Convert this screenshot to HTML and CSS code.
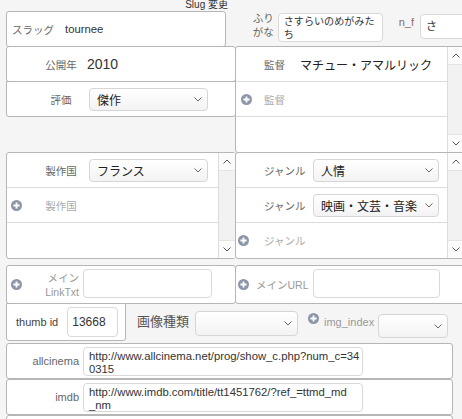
FILE: index.html
```html
<!DOCTYPE html>
<html lang="ja">
<head>
<meta charset="utf-8">
<title>Movie</title>
<link rel="stylesheet" href="styles.css">
</head>
<body>
<div class="page">
  <div class="slug-link">Slug 変更</div>

  <div class="row top-row">
    <div class="box slug-box">
      <span class="lbl">スラッグ</span><span class="slug-val">tournee</span>
    </div>
    <div class="furi">
      <div class="furi-lbl">ふり<br>がな</div>
      <div class="input furi-input">さすらいのめがみた<br>ち</div>
      <div class="nf-lbl">n_f</div>
      <div class="input nf-input">さ</div>
    </div>
  </div>

  <div class="row mid-row">
    <div class="col-left">
      <div class="box field">
        <span class="lbl cell-c">公開年</span><span class="year">2010</span>
      </div>
      <div class="box field">
        <span class="lbl cell-c">評価</span>
        <div class="select sel-l"><span>傑作</span><svg class="chev" width="8" height="5" viewBox="0 0 8 5"><polyline points="0.5,0.5 4,4 7.5,0.5" fill="none" stroke="#666" stroke-width="1"/></svg></div>
      </div>
    </div>
    <div class="box list">
      <div class="rows">
        <div class="lrow"><span class="lead-r"></span><span class="lbl cell-dir">監督</span><span class="person">マチュー・アマルリック</span></div>
        <div class="lrow"><span class="lead-r dir-lead"><svg class="plus" width="11" height="11" viewBox="0 0 12 12"><circle cx="6" cy="6" r="6" fill="#8c96a8"/><path d="M6 2.6v6.8M2.6 6h6.8" stroke="#fff" stroke-width="2"/></svg></span><span class="lbl ph">監督</span></div>
        <div class="lrow"></div>
      </div>
      <div class="scroll">
        <div class="sb-btn up"><svg width="8" height="5" viewBox="0 0 8 5"><polyline points="0.5,4.5 4,1 7.5,4.5" fill="none" stroke="#555" stroke-width="1"/></svg></div>
        <div class="sb-btn down"><svg width="8" height="5" viewBox="0 0 8 5"><polyline points="0.5,0.5 4,4 7.5,0.5" fill="none" stroke="#555" stroke-width="1"/></svg></div>
      </div>
    </div>
  </div>

  <div class="row lists-row">
    <div class="box list list-l">
      <div class="rows">
        <div class="lrow"><span class="lead-l"></span><span class="lbl cell-c">製作国</span>
          <div class="select sel-l"><span>フランス</span><svg class="chev" width="8" height="5" viewBox="0 0 8 5"><polyline points="0.5,0.5 4,4 7.5,0.5" fill="none" stroke="#666" stroke-width="1"/></svg></div>
        </div>
        <div class="lrow"><span class="lead-l"><svg class="plus" width="11" height="11" viewBox="0 0 12 12"><circle cx="6" cy="6" r="6" fill="#8c96a8"/><path d="M6 2.6v6.8M2.6 6h6.8" stroke="#fff" stroke-width="2"/></svg></span><span class="lbl ph cell-c">製作国</span></div>
        <div class="lrow"></div>
      </div>
      <div class="scroll">
        <div class="sb-btn up"><svg width="8" height="5" viewBox="0 0 8 5"><polyline points="0.5,4.5 4,1 7.5,4.5" fill="none" stroke="#555" stroke-width="1"/></svg></div>
        <div class="sb-btn down"><svg width="8" height="5" viewBox="0 0 8 5"><polyline points="0.5,0.5 4,4 7.5,0.5" fill="none" stroke="#555" stroke-width="1"/></svg></div>
      </div>
    </div>
    <div class="box list">
      <div class="rows">
        <div class="lrow"><span class="lead-r"></span><span class="lbl cell-genre">ジャンル</span>
          <div class="select sel-r"><span>人情</span><svg class="chev" width="8" height="5" viewBox="0 0 8 5"><polyline points="0.5,0.5 4,4 7.5,0.5" fill="none" stroke="#666" stroke-width="1"/></svg></div>
        </div>
        <div class="lrow"><span class="lead-r"></span><span class="lbl cell-genre">ジャンル</span>
          <div class="select sel-r"><span>映画・文芸・音楽</span><svg class="chev" width="8" height="5" viewBox="0 0 8 5"><polyline points="0.5,0.5 4,4 7.5,0.5" fill="none" stroke="#666" stroke-width="1"/></svg></div>
        </div>
        <div class="lrow"><span class="lead-r genre-lead"><svg class="plus" width="11" height="11" viewBox="0 0 12 12"><circle cx="6" cy="6" r="6" fill="#8c96a8"/><path d="M6 2.6v6.8M2.6 6h6.8" stroke="#fff" stroke-width="2"/></svg></span><span class="lbl ph">ジャンル</span></div>
      </div>
      <div class="scroll">
        <div class="sb-btn up"><svg width="8" height="5" viewBox="0 0 8 5"><polyline points="0.5,4.5 4,1 7.5,4.5" fill="none" stroke="#555" stroke-width="1"/></svg></div>
        <div class="sb-btn down"><svg width="8" height="5" viewBox="0 0 8 5"><polyline points="0.5,0.5 4,4 7.5,0.5" fill="none" stroke="#555" stroke-width="1"/></svg></div>
      </div>
    </div>
  </div>

  <div class="row link-row">
    <div class="box link-box">
      <span class="lead-l"><svg class="plus" width="11" height="11" viewBox="0 0 12 12"><circle cx="6" cy="6" r="6" fill="#8c96a8"/><path d="M6 2.6v6.8M2.6 6h6.8" stroke="#fff" stroke-width="2"/></svg></span>
      <span class="lbl light link-lbl">メイン<br>LinkTxt</span>
      <div class="input link-input"></div>
    </div>
    <div class="box url-box">
      <svg class="plus url-plus" width="11" height="11" viewBox="0 0 12 12"><circle cx="6" cy="6" r="6" fill="#8c96a8"/><path d="M6 2.6v6.8M2.6 6h6.8" stroke="#fff" stroke-width="2"/></svg>
      <span class="lbl light url-lbl">メインURL</span>
      <div class="input url-input"></div>
    </div>
  </div>

  <div class="row thumb-row">
    <div class="box thumb-box">
      <span class="thumb-lbl">thumb id</span>
      <div class="input thumb-input">13668</div>
    </div>
    <span class="kind-lbl">画像種類</span>
    <div class="select sel-kind"><span></span><svg class="chev" width="8" height="5" viewBox="0 0 8 5"><polyline points="0.5,0.5 4,4 7.5,0.5" fill="none" stroke="#666" stroke-width="1"/></svg></div>
    <svg class="plus idx-plus" width="11" height="11" viewBox="0 0 12 12"><circle cx="6" cy="6" r="6" fill="#8c96a8"/><path d="M6 2.6v6.8M2.6 6h6.8" stroke="#fff" stroke-width="2"/></svg>
    <span class="idx-lbl">img_index</span>
    <div class="select sel-idx"><span></span><svg class="chev" width="8" height="5" viewBox="0 0 8 5"><polyline points="0.5,0.5 4,4 7.5,0.5" fill="none" stroke="#666" stroke-width="1"/></svg></div>
  </div>

  <div class="box url-field first">
    <span class="url-name">allcinema</span>
    <div class="input area"><span class="line">http://www.allcinema.net/prog/show_c.php?num_c=34</span><span class="line">0315</span></div>
  </div>
  <div class="box url-field">
    <span class="url-name">imdb</span>
    <div class="input area"><span class="line">http://www.imdb.com/title/tt1451762/?ref_=ttmd_md</span><span class="line">_nm</span></div>
  </div>
  <div class="box url-field">
    <span class="url-name"></span>
    <div class="input area"></div>
  </div>
</div>
</body>
</html>
```

FILE: styles.css
```css
* { box-sizing: border-box; }
html { background: #f5f5f5; overflow: hidden; }
body {
  margin: 0;
  font-family: "Liberation Sans", "Noto Sans CJK JP", sans-serif;
  font-size: 11px;
  color: #333;
  overflow: hidden;
}
.page { padding-left: 6px; width: 480px; }

.slug-link {
  height: 11px;
  width: 230px;
  text-align: right;
  padding-right: 8px;
  font-size: 10px;
  line-height: 9px;
  color: #333;
  white-space: nowrap;
}

.row { display: flex; }
.box { background: #fff; border: 1px solid #b6b6b6; border-radius: 3px; }
.input { background: #fff; border: 1px solid #d9d9d9; border-radius: 4px; }

.lbl { font-size: 10.5px; color: #666; white-space: nowrap; }
.lbl.ph { color: #aaa; }
.lbl.light { color: #999; }

/* top row */
.top-row { height: 36px; }
.slug-box { width: 230px; height: 36px; display: flex; align-items: center; padding-left: 5px; }
.slug-val { margin-left: 11px; font-size: 11.3px; color: #333; }

.furi { flex: 1; display: flex; align-items: flex-start; padding-left: 27px; }
.furi-lbl { width: 25px; font-size: 10.5px; line-height: 14px; color: #666; }
.furi-input {
  width: 105px; height: 29px; margin-top: 2px;
  padding: 1px 5px; font-size: 10.1px; line-height: 13px; color: #333; white-space: nowrap;
}
.nf-lbl { margin-left: 16px; margin-top: 4px; font-size: 11px; line-height: 14px; color: #8a6a6a; }
.nf-input {
  width: 60px; height: 25px; margin-top: 3px; margin-left: 6px;
  padding: 0 5px; line-height: 23px; font-size: 11px; color: #333;
}

/* middle rows */
.mid-row { margin-top: -1px; }
.col-left { width: 230px; display: flex; flex-direction: column; }
.field { height: 36px; display: flex; align-items: center; padding-left: 26px; }
.field + .field { margin-top: -1px; border-top-left-radius: 0; border-top-right-radius: 0; }
.cell-c { width: 56px; text-align: center; }
.year { margin-left: -2px; font-size: 14px; color: #333; }

.list { width: 230px; height: 107px; margin-left: -1px; display: flex; }
.list-l { margin-left: 0; }
.rows { width: 211px; display: flex; flex-direction: column; }
.lrow { height: 35px; border-bottom: 1px solid #dcdcdc; display: flex; align-items: center; }
.lrow:last-child { border-bottom: none; }

.lead-l { width: 26px; padding-left: 4px; display: flex; align-items: center; }
.lead-r { width: 28px; display: flex; align-items: center; }
.dir-lead { padding-left: 5px; }
.genre-lead { padding-left: 2px; }
.plus { display: block; }
.cell-dir { width: 36px; }
.cell-genre { width: 49px; }
.person { font-size: 12px; color: #222; white-space: nowrap; }

.select {
  display: flex; align-items: center; justify-content: space-between;
  height: 23px; padding: 0 5px 0 7px;
  border: 1px solid #d6d6d6; border-radius: 4px;
  background: linear-gradient(#ffffff, #f3f3f3);
  font-size: 12px; color: #222; white-space: nowrap;
}
.chev { display: block; }
.sel-l { width: 119px; }
.sel-r { width: 126px; }

.scroll {
  width: 17px; border-left: 1px solid #dcdcdc; background: #f2f2f2;
  display: flex; flex-direction: column;
}
.sb-btn { height: 18px; background: #fbfbfb; display: flex; align-items: center; justify-content: center; }
.sb-btn.up { border-bottom: 1px solid #e4e4e4; }
.sb-btn.down { margin-top: auto; border-top: 1px solid #e4e4e4; }

.lists-row { margin-top: -1px; }

/* link row */
.link-row { margin-top: 6px; height: 39px; }
.link-box { width: 230px; height: 39px; display: flex; align-items: center; }
.link-lbl { width: 46px; text-align: right; line-height: 14px; font-size: 10.5px; }
.link-input { width: 129px; height: 29px; margin-left: 4px; margin-top: -3px; }
.url-box { width: 230px; height: 39px; margin-left: -1px; display: flex; align-items: center; }
.url-plus { margin-left: 2px; }
.url-lbl { margin-left: 7px; }
.url-input { width: 127px; height: 29px; margin-left: 4px; margin-top: -3px; }

/* thumb row */
.thumb-row { margin-top: -1px; height: 39px; align-items: flex-start; }
.thumb-box {
  width: 120px; height: 38px; display: flex; align-items: center; padding-left: 9px;
  border-top-left-radius: 0; border-top-right-radius: 0;
}
.thumb-lbl { font-size: 11px; color: #444; white-space: nowrap; }
.thumb-input { width: 51px; height: 30px; margin-left: 9px; padding-left: 4px; line-height: 28px; font-size: 12px; color: #333; }
.kind-lbl { margin-left: 11px; margin-top: 10px; font-size: 13px; line-height: 18px; color: #555; white-space: nowrap; }
.sel-kind { width: 103px; height: 25px; margin-left: 6px; margin-top: 8px; }
.idx-plus { margin-left: 10px; margin-top: 10px; }
.idx-lbl { margin-left: 5px; margin-top: 12px; font-size: 11px; line-height: 14px; color: #999; }
.sel-idx { width: 70px; height: 24px; margin-left: 4px; margin-top: 11px; }

/* url fields */
.url-field { width: 447px; height: 36px; display: flex; align-items: center; }
.url-field.first { margin-top: 1px; }
.url-name { width: 72px; text-align: right; font-size: 11px; color: #666; }
.area {
  width: 280px; height: 29px; margin-left: 4px;
  padding: 2px 5px; font-size: 11.3px; line-height: 13px; color: #333;
  display: flex; flex-direction: column;
}
.line { white-space: nowrap; }
```
